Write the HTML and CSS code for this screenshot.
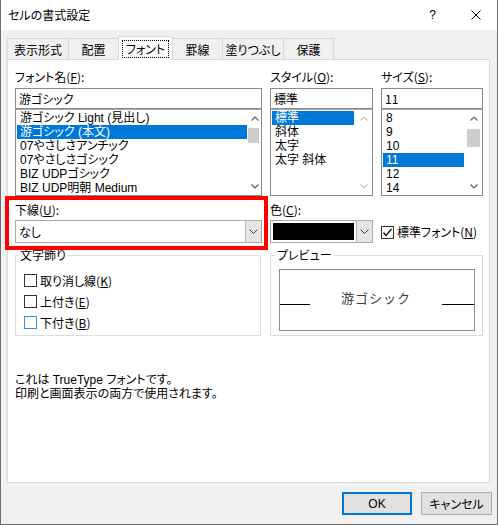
FILE: index.html
```html
<!DOCTYPE html>
<html lang="ja">
<head>
<meta charset="utf-8">
<title>セルの書式設定</title>
<link rel="stylesheet" href="styles.css">
</head>
<body>
<div class="window">
  <div class="titlebar">
    <span class="title">セルの書式設定</span>
    <span class="tb-help">?</span>
    <span class="tb-close"><svg width="10" height="10" viewBox="0 0 10 10"><path d="M0.5 0.5L9.5 9.5M9.5 0.5L0.5 9.5" stroke="#000" stroke-width="1" fill="none"/></svg></span>
  </div>

  <div class="tabs">
    <div class="tab w62">表示形式</div>
    <div class="tab w51">配置</div>
    <div class="tab w55 active"><span class="focus">フォント</span></div>
    <div class="tab w51">罫線</div>
    <div class="tab w62">塗りつぶし</div>
    <div class="tab w51">保護</div>
  </div>

  <div class="panel">
    <div class="row1">
      <div class="col c-font">
        <div class="label">フォント名(<u>F</u>):</div>
        <div class="input">游ゴシック</div>
        <div class="list">
          <div class="items">
            <div class="item">游ゴシック Light (見出し)</div>
            <div class="item sel">游ゴシック (本文)</div>
            <div class="item">07やさしさアンチック</div>
            <div class="item">07やさしさゴシック</div>
            <div class="item">BIZ UDPゴシック</div>
            <div class="item">BIZ UDP明朝 Medium</div>
          </div>
          <div class="sb sb-narrow">
            <div class="arrow"><svg width="8" height="5" viewBox="0 0 8 5"><path d="M0.5 4.5L4 1L7.5 4.5" stroke="#606060" stroke-width="1.2" fill="none"/></svg></div>
            <div class="thumb thumb-font"></div>
            <div class="sb-fill"></div>
            <div class="arrow"><svg width="8" height="5" viewBox="0 0 8 5"><path d="M0.5 0.5L4 4L7.5 0.5" stroke="#606060" stroke-width="1.2" fill="none"/></svg></div>
          </div>
        </div>
      </div>

      <div class="col c-style">
        <div class="label">スタイル(<u>O</u>):</div>
        <div class="input">標準</div>
        <div class="list">
          <div class="items">
            <div class="item sel">標準</div>
            <div class="item">斜体</div>
            <div class="item">太字</div>
            <div class="item">太字 斜体</div>
          </div>
          <div class="sb">
            <div class="arrow"><svg width="8" height="5" viewBox="0 0 8 5"><path d="M0.5 4.5L4 1L7.5 4.5" stroke="#c4c4c4" stroke-width="1.2" fill="none"/></svg></div>
            <div class="sb-fill"></div>
            <div class="arrow"><svg width="8" height="5" viewBox="0 0 8 5"><path d="M0.5 0.5L4 4L7.5 0.5" stroke="#c4c4c4" stroke-width="1.2" fill="none"/></svg></div>
          </div>
        </div>
      </div>

      <div class="col c-size">
        <div class="label">サイズ(<u>S</u>):</div>
        <div class="input">11</div>
        <div class="list">
          <div class="items">
            <div class="item">8</div>
            <div class="item">9</div>
            <div class="item">10</div>
            <div class="item sel">11</div>
            <div class="item">12</div>
            <div class="item">14</div>
          </div>
          <div class="sb">
            <div class="arrow"><svg width="8" height="5" viewBox="0 0 8 5"><path d="M0.5 4.5L4 1L7.5 4.5" stroke="#606060" stroke-width="1.2" fill="none"/></svg></div>
            <div class="thumb thumb-size"></div>
            <div class="sb-fill"></div>
            <div class="arrow"><svg width="8" height="5" viewBox="0 0 8 5"><path d="M0.5 0.5L4 4L7.5 0.5" stroke="#606060" stroke-width="1.2" fill="none"/></svg></div>
          </div>
        </div>
      </div>
    </div>

    <div class="row2">
      <div class="col c-under">
        <div class="label lab2">下線(<u>U</u>):</div>
        <div class="combo">
          <span class="combo-text">なし</span>
          <span class="combo-btn"><svg width="9" height="5" viewBox="0 0 9 5"><path d="M0.5 0.5L4.5 4.5L8.5 0.5" stroke="#404040" stroke-width="1" fill="none"/></svg></span>
        </div>
      </div>
      <div class="col c-color">
        <div class="label lab2">色(<u>C</u>):</div>
        <div class="combo">
          <span class="swatch"></span>
          <span class="combo-btn"><svg width="9" height="5" viewBox="0 0 9 5"><path d="M0.5 0.5L4.5 4.5L8.5 0.5" stroke="#404040" stroke-width="1" fill="none"/></svg></span>
        </div>
      </div>
      <div class="col c-std">
        <div class="cb-row">
          <span class="cb"><svg width="11" height="11" viewBox="0 0 11 11"><path d="M1.5 5.5L4 8.5L9.5 2" stroke="#000" stroke-width="1.2" fill="none"/></svg></span>
          <span>標準フォント(<u>N</u>)</span>
        </div>
      </div>
    </div>

    <div class="row3">
      <fieldset class="group g-effects">
        <legend class="lg-effects">文字飾り</legend>
        <div class="cb-row"><span class="cb"></span><span>取り消し線(<u>K</u>)</span></div>
        <div class="cb-row"><span class="cb"></span><span>上付き(<u>E</u>)</span></div>
        <div class="cb-row"><span class="cb cb-hover"></span><span>下付き(<u>B</u>)</span></div>
      </fieldset>
      <fieldset class="group g-preview">
        <legend class="lg-preview">プレビュー</legend>
        <div class="preview">
          <span class="pv-line pv-left"></span>
          <span class="pv-text">游ゴシック</span>
          <span class="pv-line pv-right"></span>
        </div>
      </fieldset>
    </div>

    <div class="info">
      <div>これは TrueType フォントです。</div>
      <div>印刷と画面表示の両方で使用されます。</div>
    </div>

    <div class="redbox"></div>
  </div>

  <div class="footer">
    <div class="btn btn-ok"><span class="btn-focus">OK</span></div>
    <div class="btn btn-cancel">キャンセル</div>
  </div>
</div>
</body>
</html>
```

FILE: styles.css
```css
* { box-sizing: border-box; }
html, body { margin: 0; padding: 0; }
body {
  width: 498px;
  height: 525px;
  overflow: hidden;
  background: #ffffff;
  font-family: "Noto Sans CJK JP", "Noto Sans", sans-serif;
  font-size: 12px;
  color: #000;
  font-feature-settings: "palt";
}
u { text-decoration: underline; text-underline-offset: 1px; }

.window {
  width: 498px;
  height: 525px;
  border: 1px solid #6e6e6e;
  border-top: none;
  background: #f0f0f0;
  display: flex;
  flex-direction: column;
}

/* title bar */
.titlebar {
  height: 30px;
  flex: none;
  background: #ffffff;
  display: flex;
  align-items: center;
  padding-left: 7px;
  line-height: 16px;
}
.title { flex: 1; }
.tb-help { width: 45px; text-align: center; font-family: "Liberation Sans", sans-serif; font-size: 12px; }
.tb-close { width: 42px; display: flex; justify-content: center; align-items: center; }

/* tabs */
.tabs {
  height: 29px;
  flex: none;
  display: flex;
  align-items: flex-end;
  padding-left: 6px;
}
.tab {
  height: 21px;
  margin-left: -1px;
  border: 1px solid #d9d9d9;
  border-bottom: none;
  background: #f0f0f0;
  display: flex;
  justify-content: center;
  align-items: flex-start;
  padding-top: 3px;
  line-height: 16px;
  white-space: nowrap;
}
.tab:first-child { margin-left: 0; }
.w62 { width: 62px; }
.w51 { width: 51px; }
.w55 { width: 55px; }
.tab.active {
  height: 24px;
  margin-bottom: -1px;
  background: #ffffff;
  position: relative;
  z-index: 1;
  padding-top: 3px;
}
.focus {
  border: 1px dotted #000;
  padding: 0 3px;
  line-height: 16px;
}

/* panel */
.panel {
  position: relative;
  height: 424px;
  flex: none;
  margin: 0 7px 0 6px;
  background: #ffffff;
  border: 1px solid #d9d9d9;
  padding: 9px 6px 0 7px;
}

.label { height: 16px; line-height: 16px; margin-bottom: 3px; white-space: nowrap; }

.row1 { display: flex; }
.c-font { width: 247px; }
.c-style { width: 103px; margin-left: 8px; }
.c-size { width: 102px; margin-left: 8px; }

.input {
  height: 21px;
  border: 1px solid #8a8a8a;
  padding-left: 3px;
  line-height: 19px;
  white-space: nowrap;
}
.list {
  height: 87px;
  border: 1px solid #8a8a8a;
  border-top-color: #a8a8a8;
  display: flex;
}
.items {
  flex: 1;
  padding: 1px;
  min-width: 0;
  font-family: "Liberation Sans", "Noto Sans CJK JP", sans-serif;
}
.item {
  height: 14px;
  line-height: 14px;
  padding-left: 3px;
  white-space: nowrap;
}
.item.sel { background: #0078d7; color: #ffffff; }
.sb {
  width: 17px;
  flex: none;
  display: flex;
  flex-direction: column;
  align-items: center;
}
.sb-narrow { width: 13px; align-items: flex-start; }
.arrow { height: 17px; width: 100%; display: flex; justify-content: center; align-items: center; }
.thumb { width: 13px; height: 15px; background: #cdcdcd; }
.thumb-font { width: 11px; margin-top: 1px; }
.thumb-size { height: 18px; margin-top: 2px; }
.sb-fill { flex: 1; }

/* row 2 */
.row2 { display: flex; margin-top: 6px; }
.lab2 { margin-bottom: 2px; }
.c-under { width: 247px; }
.c-color { width: 103px; margin-left: 8px; }
.c-std { margin-left: 8px; padding-top: 22px; }
.combo {
  height: 23px;
  border: 1px solid #a9a9a9;
  background: #ffffff;
  display: flex;
}
.combo-text { flex: 1; padding-left: 3px; line-height: 21px; }
.combo-btn {
  width: 16px;
  flex: none;
  background: #e6e6e6;
  border-left: 1px solid #b4b4b4;
  display: flex;
  justify-content: center;
  align-items: center;
}
.swatch { flex: 1; margin: 2px; background: #000000; }

.cb-row { display: flex; align-items: center; height: 21px; line-height: 16px; white-space: nowrap; }
.cb {
  width: 13px;
  height: 13px;
  flex: none;
  border: 1px solid #333333;
  background: #ffffff;
  margin-right: 3px;
  display: flex;
  align-items: center;
  justify-content: center;
}
.cb-hover { border-color: #3a8ee0; }
.c-std .cb-row { height: 16px; }

/* row 3 */
.row3 { display: flex; margin-top: 4px; }
.group {
  margin: 0;
  padding: 0;
  border: 1px solid #dcdcdc;
  min-width: 0;
}
.group legend { padding: 0 2px; line-height: 16px; height: 16px; }
.g-effects { width: 246px; padding: 7px 0 2px 8px; }
.lg-effects { margin-left: -6px; }
.g-preview { width: 213px; margin-left: 9px; padding: 6px 7px 4px 8px; }
.lg-preview { margin-left: -4px; }
.preview {
  height: 62px;
  border: 1px solid #8c8c8c;
  display: flex;
  align-items: center;
  justify-content: space-between;
}
.pv-line { height: 1px; background: #000; margin-top: 8px; }
.pv-left { width: 30px; }
.pv-right { width: 32px; }
.pv-text {
  font-size: 13px;
  line-height: 16px;
  letter-spacing: 1px;
  color: #3a3a3a;
  margin-bottom: 4px;
  font-feature-settings: normal;
}

.info {
  margin-top: 37px;
  line-height: 14px;
  font-family: "Liberation Sans", "Noto Sans CJK JP", sans-serif;
}

.redbox {
  position: absolute;
  left: -3px;
  top: 136px;
  width: 263px;
  height: 54px;
  border: 4px solid #ff0000;
}

/* footer */
.footer {
  flex: 1;
  display: flex;
  justify-content: flex-end;
  align-items: flex-start;
  padding: 9px 5px 0 0;
  gap: 9px;
}
.btn {
  height: 23px;
  background: #e1e1e1;
  display: flex;
  align-items: center;
  justify-content: center;
  line-height: 16px;
}
.btn-ok {
  width: 70px;
  border: 1px solid #0078d7;
  box-shadow: inset 0 0 0 1px #0078d7;
  font-family: "Liberation Sans", sans-serif;
}
.btn-focus { padding: 0 3px; }
.btn-cancel { width: 71px; border: 1px solid #adadad; }
```
